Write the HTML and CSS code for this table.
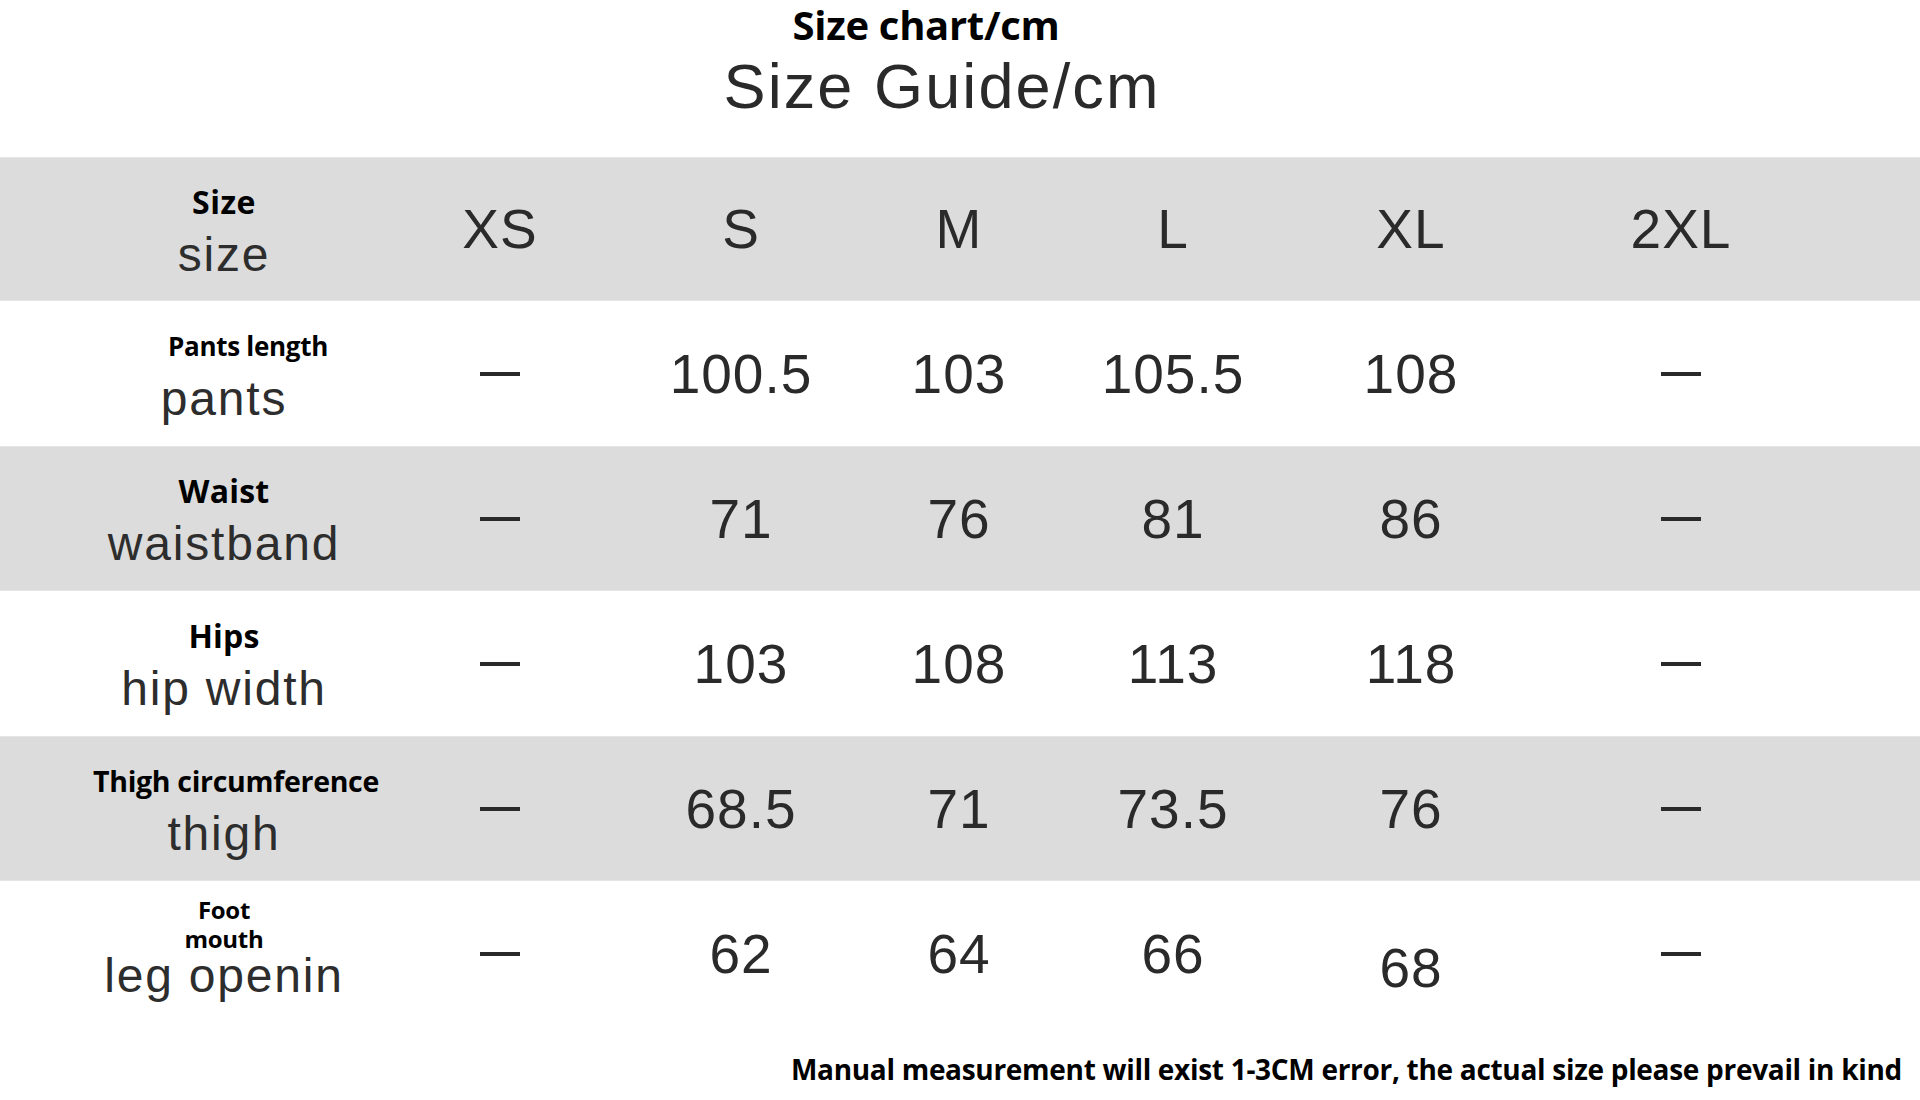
FILE: index.html
```html
<!DOCTYPE html>
<html lang="en">
<head>
<meta charset="utf-8">
<title>Size Guide</title>
<link rel="stylesheet" href="styles.css">
</head>
<body>
<div class="page">
  <header class="titles">
    <div class="title-bold">Size chart/cm</div>
    <div class="title-main">Size Guide/cm</div>
  </header>

  <div class="chart">
    <div class="row row-gray row-head">
      <div class="label"><div class="lb lb-head">Size</div><div class="lr">size</div></div>
      <div class="cell">XS</div>
      <div class="cell">S</div>
      <div class="cell">M</div>
      <div class="cell">L</div>
      <div class="cell">XL</div>
      <div class="cell">2XL</div>
    </div>

    <div class="row">
      <div class="label"><div class="lb lb-sm shift-r">Pants length</div><div class="lr">pants</div></div>
      <div class="cell"><span class="dash"></span></div>
      <div class="cell">100.5</div>
      <div class="cell">103</div>
      <div class="cell">105.5</div>
      <div class="cell">108</div>
      <div class="cell"><span class="dash"></span></div>
    </div>

    <div class="row row-gray">
      <div class="label"><div class="lb lb-lg">Waist</div><div class="lr">waistband</div></div>
      <div class="cell"><span class="dash"></span></div>
      <div class="cell">71</div>
      <div class="cell">76</div>
      <div class="cell">81</div>
      <div class="cell">86</div>
      <div class="cell"><span class="dash"></span></div>
    </div>

    <div class="row">
      <div class="label"><div class="lb lb-lg">Hips</div><div class="lr">hip width</div></div>
      <div class="cell"><span class="dash"></span></div>
      <div class="cell">103</div>
      <div class="cell">108</div>
      <div class="cell">113</div>
      <div class="cell">118</div>
      <div class="cell"><span class="dash"></span></div>
    </div>

    <div class="row row-gray">
      <div class="label"><div class="lb lb-md shift-s">Thigh circumference</div><div class="lr">thigh</div></div>
      <div class="cell"><span class="dash"></span></div>
      <div class="cell">68.5</div>
      <div class="cell">71</div>
      <div class="cell">73.5</div>
      <div class="cell">76</div>
      <div class="cell"><span class="dash"></span></div>
    </div>

    <div class="row">
      <div class="label label-foot"><div class="lb lb-xs">Foot mouth</div><div class="lr lr-tight">leg openin</div></div>
      <div class="cell"><span class="dash"></span></div>
      <div class="cell">62</div>
      <div class="cell">64</div>
      <div class="cell">66</div>
      <div class="cell cell-low">68</div>
      <div class="cell"><span class="dash"></span></div>
    </div>
  </div>

  <p class="note">Manual measurement will exist 1-3CM error, the actual size please prevail in kind</p>
</div>
</body>
</html>
```

FILE: styles.css
```css
* { box-sizing: border-box; }

html, body {
  margin: 0;
  padding: 0;
  background: #ffffff;
}

.page {
  width: 1920px;
  height: 1100px;
  overflow: hidden;
  background: #ffffff;
  color: #2d2d2d;
  font-family: "Liberation Sans", Arial, sans-serif;
}

/* ---------- titles ---------- */
.titles {
  height: 157px;
  padding-top: 6px;
  text-align: center;
}

.title-bold {
  font-family: "Open Sans", Lato, sans-serif;
  font-weight: 700;
  font-size: 40px;
  line-height: 38px;
  letter-spacing: -0.3px;
  color: #000;
  padding-right: 68px;
  white-space: nowrap;
}

.title-main {
  margin-top: 11px;
  font-size: 63px;
  line-height: 63px;
  letter-spacing: 2.1px;
  color: #2a2a2a;
  padding-right: 36px;
  white-space: nowrap;
}

/* ---------- chart ---------- */
.chart {
  display: flex;
  flex-direction: column;
}

.row {
  display: grid;
  grid-template-columns: 362px 276px 206px 230px 198px 278px 262px;
  padding-right: 108px;
  height: 145px;
}

.row-head { height: 144px; }

.row-gray {
  background: #dcdcdc;
  box-shadow: inset 0 1px 0 #e6e6e6, inset 0 -1px 0 #e6e6e6;
}

.label {
  padding-top: 30px;
  padding-left: 86px;
  text-align: center;
  white-space: nowrap;
}

.lb {
  font-family: "Open Sans", Lato, sans-serif;
  font-weight: 700;
  font-size: 27px;
  line-height: 30px;
  letter-spacing: -0.3px;
  color: #000;
}

.lb-head { font-size: 32px; letter-spacing: 0.5px; }
.lb-sm { font-size: 26px; }
.lb-md { font-size: 28.5px; }
.lb-lg { font-size: 32px; letter-spacing: 0.2px; }
.lb-xs {
  font-size: 24px;
  line-height: 29px;
  white-space: normal;
  width: 90px;
  margin: 0 auto;
}

.shift-r { padding-left: 48px; }
.shift-s { padding-left: 7px; }

.lr {
  margin-top: 10px;
  font-size: 48px;
  line-height: 56px;
  letter-spacing: 1.8px;
  color: #2d2d2d;
}

.label-foot { padding-top: 14px; }
.lr-tight { margin-top: -5px; }

.cell {
  display: flex;
  align-items: center;
  justify-content: center;
  font-size: 55px;
  line-height: 64px;
  letter-spacing: 1px;
  color: #2a2a2a;
  white-space: nowrap;
}

.cell-low { padding-top: 28px; }

.dash {
  display: block;
  width: 40px;
  height: 4px;
  background: #2a2a2a;
}

/* ---------- note ---------- */
.note {
  margin: 28px 0 0 0;
  padding-right: 18px;
  text-align: right;
  font-family: "Open Sans", Lato, sans-serif;
  font-weight: 700;
  font-size: 28px;
  line-height: 30px;
  letter-spacing: -0.3px;
  color: #000;
  white-space: nowrap;
}
```
